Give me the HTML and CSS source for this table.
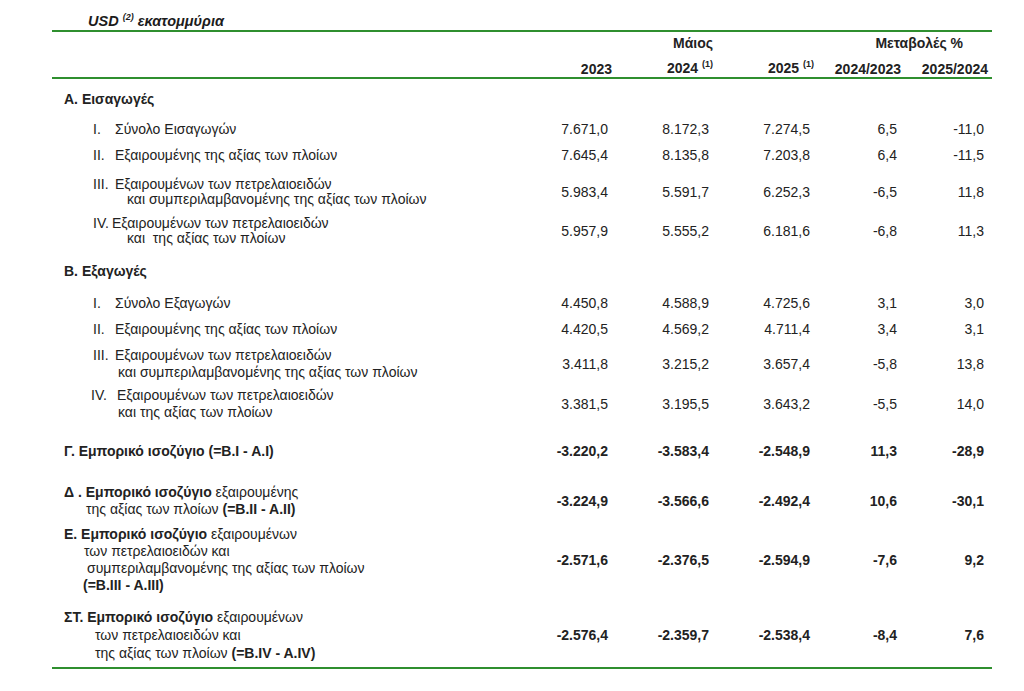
FILE: index.html
```html
<!DOCTYPE html>
<html lang="el">
<head>
<meta charset="utf-8">
<title>Εμπορικό ισοζύγιο</title>
<link rel="stylesheet" href="styles.css">
</head>
<body>
<div class="page">
  <div class="unit"><i>USD <sup>(2)</sup> εκατομμύρια</i></div>
  <div class="table">
    <div class="head">
      <div class="hrow">
        <div></div><div></div><div class="hc">Μάιος</div><div></div>
        <div class="hc span2">Μεταβολές %</div>
      </div>
      <div class="hrow">
        <div></div>
        <div class="hc">2023</div>
        <div class="hc">2024 <sup>(1)</sup></div>
        <div class="hc">2025 <sup>(1)</sup></div>
        <div class="hc">2024/2023</div>
        <div class="hc">2025/2024</div>
      </div>
    </div>

    <div class="row sec r-a"><div class="lbl b">Α. Εισαγωγές</div></div>

    <div class="row r-a1 tight">
      <div class="lbl"><span class="num">I.</span>Σύνολο Εισαγωγών</div>
      <div class="v">7.671,0</div><div class="v">8.172,3</div><div class="v">7.274,5</div><div class="v">6,5</div><div class="v">-11,0</div>
    </div>
    <div class="row r-a2 tight">
      <div class="lbl"><span class="num">II.</span>Εξαιρουμένης της αξίας των πλοίων</div>
      <div class="v">7.645,4</div><div class="v">8.135,8</div><div class="v">7.203,8</div><div class="v">6,4</div><div class="v">-11,5</div>
    </div>
    <div class="row r-a3 tight">
      <div class="lbl"><span class="num">III.</span>Εξαιρουμένων των πετρελαιοειδών<br><span class="cont c-a">και συμπεριλαμβανομένης της αξίας των πλοίων</span></div>
      <div class="v">5.983,4</div><div class="v">5.591,7</div><div class="v">6.252,3</div><div class="v">-6,5</div><div class="v">11,8</div>
    </div>
    <div class="row r-a4 tight">
      <div class="lbl"><span class="num n-iv">IV.</span>Εξαιρουμένων των πετρελαιοειδών<br><span class="cont c-a">και&nbsp; της αξίας των πλοίων</span></div>
      <div class="v">5.957,9</div><div class="v">5.555,2</div><div class="v">6.181,6</div><div class="v">-6,8</div><div class="v">11,3</div>
    </div>

    <div class="row sec r-b"><div class="lbl b">Β. Εξαγωγές</div></div>

    <div class="row r-b1">
      <div class="lbl"><span class="num">I.</span>Σύνολο Εξαγωγών</div>
      <div class="v">4.450,8</div><div class="v">4.588,9</div><div class="v">4.725,6</div><div class="v">3,1</div><div class="v">3,0</div>
    </div>
    <div class="row r-b2">
      <div class="lbl"><span class="num">II.</span>Εξαιρουμένης της αξίας των πλοίων</div>
      <div class="v">4.420,5</div><div class="v">4.569,2</div><div class="v">4.711,4</div><div class="v">3,4</div><div class="v">3,1</div>
    </div>
    <div class="row r-b3">
      <div class="lbl"><span class="num">III.</span>Εξαιρουμένων των πετρελαιοειδών<br><span class="cont c-b3">και συμπεριλαμβανομένης της αξίας των πλοίων</span></div>
      <div class="v">3.411,8</div><div class="v">3.215,2</div><div class="v">3.657,4</div><div class="v">-5,8</div><div class="v">13,8</div>
    </div>
    <div class="row r-b4">
      <div class="lbl"><span class="num n-ivb">IV.</span>Εξαιρουμένων των πετρελαιοειδών<br><span class="cont c-b4">και της αξίας των πλοίων</span></div>
      <div class="v">3.381,5</div><div class="v">3.195,5</div><div class="v">3.643,2</div><div class="v">-5,5</div><div class="v">14,0</div>
    </div>

    <div class="row tot r-g">
      <div class="lbl b">Γ. Εμπορικό ισοζύγιο (=B.I - A.I)</div>
      <div class="v">-3.220,2</div><div class="v">-3.583,4</div><div class="v">-2.548,9</div><div class="v">11,3</div><div class="v">-28,9</div>
    </div>
    <div class="row tot r-d">
      <div class="lbl"><b>Δ . Εμπορικό ισοζύγιο</b> εξαιρουμένης<br><span class="cont c-d">της αξίας των πλοίων <b>(=B.II - A.II)</b></span></div>
      <div class="v">-3.224,9</div><div class="v">-3.566,6</div><div class="v">-2.492,4</div><div class="v">10,6</div><div class="v">-30,1</div>
    </div>
    <div class="row tot r-e">
      <div class="lbl"><b>Ε. Εμπορικό ισοζύγιο</b> εξαιρουμένων<br><span class="cont c-e1">των πετρελαιοειδών και</span><br><span class="cont c-e2">συμπεριλαμβανομένης της αξίας των πλοίων</span><br><span class="cont c-e3"><b>(=B.III - A.III)</b></span></div>
      <div class="v">-2.571,6</div><div class="v">-2.376,5</div><div class="v">-2.594,9</div><div class="v">-7,6</div><div class="v">9,2</div>
    </div>
    <div class="row tot r-st">
      <div class="lbl"><b>ΣΤ. Εμπορικό ισοζύγιο</b> εξαιρουμένων<br><span class="cont c-st">των πετρελαιοειδών και</span><br><span class="cont c-st">της αξίας των πλοίων <b>(=B.IV - A.IV)</b></span></div>
      <div class="v">-2.576,4</div><div class="v">-2.359,7</div><div class="v">-2.538,4</div><div class="v">-8,4</div><div class="v">7,6</div>
    </div>
  </div>
</div>
</body>
</html>
```

FILE: styles.css
```css
* { box-sizing: border-box; }

html, body {
  margin: 0;
  padding: 0;
  background: #ffffff;
}

body {
  font-family: "Liberation Sans", Arial, sans-serif;
  font-size: 14px;
  color: #222222;
}

.page {
  padding-left: 52px;
  width: 992px;
}

.unit {
  height: 30px;
  padding: 13px 0 0 36px;
  font-weight: bold;
  font-size: 14.5px;
  line-height: 17px;
  color: #1c1c1c;
}

.unit sup {
  font-size: 9px;
  vertical-align: 0;
  position: relative;
  top: -6px;
}

.table {
  border-top: 2px solid #2f8f2f;
  border-bottom: 2px solid #2f8f2f;
  padding-bottom: 5px;
}

.head {
  border-bottom: 2px solid #2f8f2f;
  padding: 3px 0 1px;
}

.hrow,
.row {
  display: grid;
  grid-template-columns: 464px 96px 101px 101px 87px 87px;
  align-items: center;
}

.hrow {
  height: 16px;
  line-height: 16px;
}

.hrow + .hrow {
  margin-top: 9px;
}

.hc {
  text-align: right;
  font-weight: bold;
  white-space: nowrap;
}

.hc.span2 {
  grid-column: 5 / 7;
  padding-right: 25px;
}

.hc sup {
  font-size: 9px;
  vertical-align: 0;
  position: relative;
  top: -6px;
}

.row {
  line-height: 17px;
}

.row.tight {
  line-height: 15px;
}

.lbl {
  padding-left: 41px;
  white-space: nowrap;
}

.sec .lbl,
.tot .lbl {
  padding-left: 12px;
}

.b {
  font-weight: bold;
}

.tot .v {
  font-weight: bold;
}

.num {
  display: inline-block;
  width: 22px;
}

.num.n-iv {
  width: 19px;
}

.num.n-ivb {
  width: 26px;
  margin-left: -2px;
}

.cont {
  display: inline-block;
}

.c-a { margin-left: 34px; }
.c-b3 { margin-left: 25px; }
.c-b4 { margin-left: 25px; }
.c-d { margin-left: 22px; }
.c-e1 { margin-left: 20px; }
.c-e2 { margin-left: 23px; }
.c-e3 { margin-left: 19px; }
.c-st { margin-left: 31px; }

.v {
  text-align: right;
  padding-right: 4px;
  white-space: nowrap;
}

/* vertical rhythm */
.r-a  { margin-top: 12px; }
.r-a1 { margin-top: 14px; }
.r-a2 { margin-top: 11px; }
.r-a3 { margin-top: 14px; }
.r-a4 { margin-top: 9px; }
.r-b  { margin-top: 17px; }
.r-b1 { margin-top: 15px; }
.r-b2 { margin-top: 9px; }
.r-b3 { margin-top: 9px; }
.r-b4 { margin-top: 6px; }
.r-g  { margin-top: 22px; }
.r-d  { margin-top: 24px; }
.r-e  { margin-top: 8px; }
.r-st { margin-top: 14px; line-height: 18px; }
```
